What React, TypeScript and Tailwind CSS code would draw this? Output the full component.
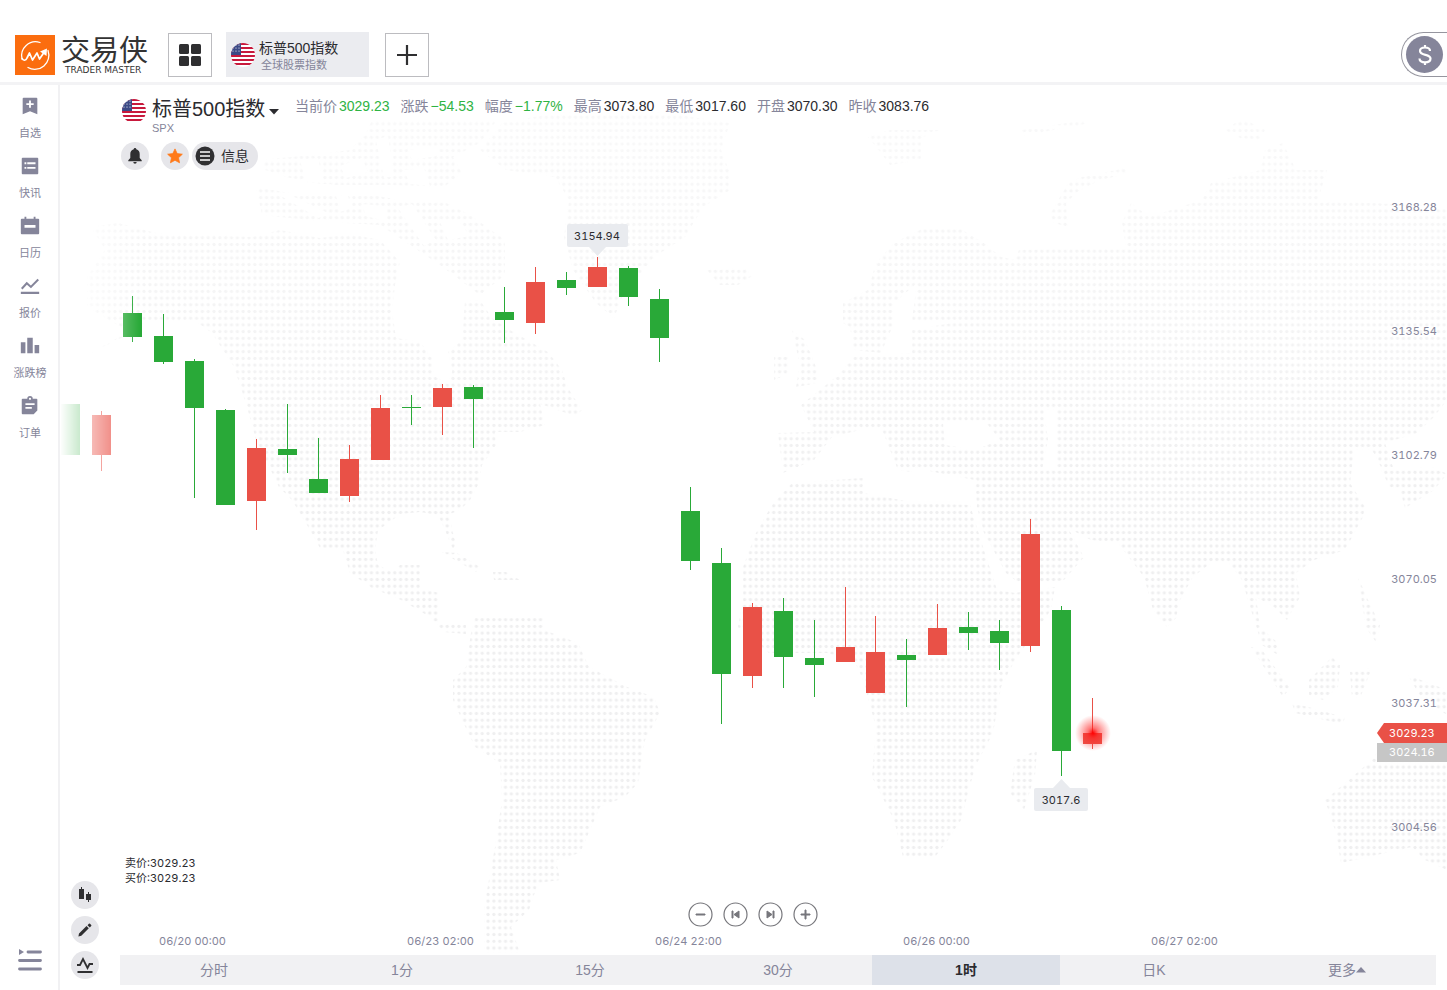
import { useState } from "react";
import type { ReactNode } from "react";

const GREEN = "#29a938";
const RED = "#e95147";

// [left, bodyTop, bodyBottom, high, low, up]
type Candle = [number, number, number, number, number, boolean];

const candles: Candle[] = [
  [61, 404, 455, 404, 455, false],
  [92, 415, 455, 411, 471, true],
  [123, 313, 337, 296, 342, false],
  [154, 336, 362, 314, 364, false],
  [185, 361, 408, 359, 498, false],
  [216, 410, 505, 409, 505, false],
  [247, 448, 501, 439, 530, true],
  [278, 449, 455, 404, 473, false],
  [309, 479, 493, 438, 493, false],
  [340, 459, 496, 445, 502, true],
  [371, 408, 460, 395, 460, true],
  [402, 407, 408, 395, 425, false],
  [433, 388, 407, 384, 435, true],
  [464, 387, 399, 385, 448, false],
  [495, 312, 320, 287, 343, false],
  [526, 282, 323, 267, 334, true],
  [557, 280, 288, 272, 295, false],
  [588, 267, 287, 257, 287, true],
  [619, 268, 297, 266, 306, false],
  [650, 299, 338, 289, 362, false],
  [681, 511, 561, 487, 570, false],
  [712, 563, 674, 548, 724, false],
  [743, 607, 676, 603, 688, true],
  [774, 611, 657, 598, 688, false],
  [805, 658, 665, 620, 697, false],
  [836, 647, 662, 587, 662, true],
  [866, 652, 693, 616, 693, true],
  [897, 655, 660, 639, 707, false],
  [928, 628, 655, 604, 655, true],
  [959, 627, 633, 612, 650, false],
  [990, 631, 643, 620, 670, false],
  [1021, 534, 646, 519, 652, true],
  [1052, 610, 751, 606, 776, false],
  [1083, 733, 744, 698, 749, true],
];

const land = [
  // north america
  "M91 227L118 223L156 233L252 237L280 230L320 238L350 234L380 240L400 262L395 285L392 310L396 338L420 342L432 358L434 376L448 384L452 372L448 352L462 340L465 300L480 300L492 318L510 330L548 352L562 370L568 388L582 410L575 416L540 404L545 425L520 432L495 432L496 445L482 465L478 485L470 500L460 510L450 514L452 530L456 543L453 550L445 530L438 515L420 512L400 514L390 522L378 530L375 550L378 565L392 572L400 565L420 565L420 588L439 593L439 622L466 625L466 634L444 632L430 617L401 600L372 588L350 573L343 550L320 548L310 530L292 500L279 487L256 440L247 407L234 367L212 333L198 323L149 320L91 353L131 333L87 307L87 277L105 250Z",
  // arctic islands and the channels between them
  "M372 120L497 120L480 143L453 157L462 173L444 187L390 185L335 185L290 178L265 170L262 160L310 155L350 150L365 135Z",
  "M300 160L318 158L324 184L306 182ZM340 166L362 158L368 172L346 178ZM376 140L388 136L394 176L384 178ZM408 150L440 146L436 156L412 160ZM404 170L424 168L430 186L410 184Z",
  "M256 187L300 195L372 195L400 200L440 200L470 215L505 240L505 275L480 295L460 280L440 265L410 245L380 225L330 222L290 218L262 215Z",
  "M276 193L288 194L330 214L318 218ZM336 196L348 196L352 208L340 212ZM362 204L384 206L388 222L366 216ZM398 208L412 204L436 240L424 246ZM440 222L458 220L470 236L448 240Z",
  // greenland, iceland
  "M502 123L560 112L660 112L730 123L721 150L730 173L730 190L703 207L685 237L654 257L622 297L614 318L596 303L573 270L564 237L569 200L555 177L506 170L480 150Z",
  "M707 270L745 268L752 276L738 285L720 285Z",
  // caribbean
  "M442 552L457 553L480 567L476 572L455 560ZM493 572L506 572L520 580L494 580Z",
  // south america
  "M475 618L544 618L544 630L578 643L589 667L627 687L654 697L660 713L645 740L638 783L625 797L600 807L580 853L556 860L560 880L538 883L529 910L511 927L520 953L484 953L484 907L495 847L502 800L500 763L475 747L462 720L453 700L453 680L466 667L471 633Z",
  // svalbard, novaya zemlya, severnaya zemlya
  "M868 137L890 130L939 130L921 138L921 160L890 165L881 153Z",
  "M1051 213L1068 183L1082 177L1126 168L1126 174L1100 180L1077 192L1066 203L1068 227L1052 222Z",
  "M1225 130L1242 118L1265 130L1260 140L1240 138ZM1022 130L1085 120L1085 124L1022 136Z",
  // eurasia with the black and caspian seas cut out
  "M843 323L843 303L868 290L876 263L894 243L926 227L957 227L984 243L1001 257L1015 260L1019 250L1126 247L1122 223L1131 203L1149 217L1202 200L1211 183L1234 177L1260 170L1265 150L1283 143L1296 170L1327 170L1318 200L1372 203L1447 207L1447 400L1434 417L1417 433L1385 443L1393 467L1381 467L1372 450L1354 450L1350 483L1365 507L1363 517L1345 550L1314 560L1296 573L1300 597L1287 620L1274 607L1256 597L1260 627L1278 643L1278 655L1262 645L1251 610L1242 580L1229 563L1211 563L1193 577L1180 600L1176 618L1167 627L1153 610L1144 577L1131 560L1118 543L1091 540L1068 528L1084 557L1064 580L1024 587L1006 573L984 533L977 507L975 480L939 473L912 467L903 440L912 472L898 470L881 427L860 430L832 437L814 460L783 473L778 433L814 432L801 405L836 377L854 357L912 353L912 330L952 323L912 320L917 283L894 303L894 323L881 353L854 350L850 327ZM943 423L984 420L1000 440L975 450L945 445ZM1044 410L1057 410L1057 470L1042 470L1048 440Z",
  "M792 330L805 340L816 367L818 383L796 387L800 365ZM774 357L788 357L788 374L774 380Z",
  // africa, madagascar
  "M792 483L863 478L863 493L917 503L970 505L984 550L997 590L1015 593L1055 587L1051 610L1015 660L1001 687L993 733L975 767L961 820L948 840L935 857L903 857L894 820L872 777L876 727L863 680L854 660L827 653L769 653L738 627L743 600L743 567L756 533L772 505Z",
  "M1015 760L1037 750L1035 775L1024 810L1010 793Z",
  // south-east asia
  "M1251 647L1262 650L1290 688L1283 697ZM1309 680L1332 657L1340 665L1338 687L1323 700L1309 695ZM1292 703L1320 710L1345 718L1342 724L1295 713ZM1358 577L1368 600L1380 625L1376 642L1366 628ZM1350 672L1372 668L1360 698L1352 698ZM1408 675L1447 690L1447 715L1420 696Z",
  // australia
  "M1372 760L1380 748L1410 742L1447 740L1447 870L1425 860L1412 847L1341 863L1336 833L1325 800L1345 783Z",
  // japan
  "M1381 470L1434 467L1447 474L1434 490L1405 508L1400 490L1390 487Z",
].join("");

const intervals = ["分时", "1分", "15分", "30分", "1时", "日K", "更多"];
const prices = ["3168.28", "3135.54", "3102.79", "3070.05", "3037.31", "3004.56"];
const dates = ["06/20 00:00", "06/23 02:00", "06/24 22:00", "06/26 00:00", "06/27 02:00"];

const stats = [
  { label: "当前价", value: "3029.23", color: "text-[#2fb344]" },
  { label: "涨跌", value: "−54.53", color: "text-[#2fb344]" },
  { label: "幅度", value: "−1.77%", color: "text-[#2fb344]" },
  { label: "最高", value: "3073.80", color: "text-[#2b2b2f]" },
  { label: "最低", value: "3017.60", color: "text-[#2b2b2f]" },
  { label: "开盘", value: "3070.30", color: "text-[#2b2b2f]" },
  { label: "昨收", value: "3083.76", color: "text-[#2b2b2f]" },
];

const navItems: { label: string; icon: ReactNode }[] = [
  {
    label: "自选",
    icon: (
      <path
        fillRule="evenodd"
        d="M5 3h14a1 1 0 0 1 1 1v17l-8-3.200L4 21V4a1 1 0 0 1 1-1zM11 6v3H8v2h3v3h2v-3h3V9h-3V6z"
      />
    ),
  },
  {
    label: "快讯",
    icon: (
      <path
        fillRule="evenodd"
        d="M4 3h16a1 1 0 0 1 1 1v16a1 1 0 0 1-1 1H4a1 1 0 0 1-1-1V4a1 1 0 0 1 1-1zM6 8v2h2V8zM9 8v2h9V8zM6 13v2h2v-2zM9 13v2h9v-2z"
      />
    ),
  },
  {
    label: "日历",
    icon: (
      <path
        fillRule="evenodd"
        d="M6 2h2v2h8V2h2v2h3a1 1 0 0 1 1 1v15a1 1 0 0 1-1 1H3a1 1 0 0 1-1-1V5a1 1 0 0 1 1-1h3zM6 11v3h12v-3z"
      />
    ),
  },
  {
    label: "报价",
    icon: (
      <path
        d="M3 15l5.500-6 4.500 4 8-8M2 19.500h20"
        fill="none"
        stroke="currentColor"
        strokeWidth="2.200"
      />
    ),
  },
  {
    label: "涨跌榜",
    icon: <path d="M2 8h5v12H2zM9 3h6v17H9zM17 11h5v9h-5z" />,
  },
  {
    label: "订单",
    icon: (
      <path
        fillRule="evenodd"
        d="M4 4h5a3 3 0 0 1 6 0h4a1 1 0 0 1 1 1v12l-4 4H4a1 1 0 0 1-1-1V5a1 1 0 0 1 1-1zM12 3a1.200 1.200 0 1 0 0 2.400a1.200 1.200 0 0 0 0-2.400zM7 9v2h10V9zM7 13v2h7v-2z"
      />
    ),
  },
];

function UsFlag() {
  return (
    <svg viewBox="0 0 24 24" className="size-6 shrink-0" aria-hidden="true">
      <clipPath id="flag-round">
        <circle cx="12" cy="12" r="12" />
      </clipPath>
      <g clipPath="url(#flag-round)">
        <rect width="24" height="24" fill="#fff" />
        {[0, 4, 8, 12, 16, 20].map((y) => (
          <rect key={y} y={y} width="24" height="2" fill="#c8193c" />
        ))}
        <rect width="10" height="12" fill="#3c4a86" />
        {[2, 5, 8].map((y) =>
          [2, 5, 8].map((x) => <circle key={`${x}-${y}`} cx={x} cy={y} r="0.6" fill="#fff" />)
        )}
      </g>
    </svg>
  );
}

function Logo() {
  return (
    <a href="#" className="flex w-[153px] items-center gap-[6px] text-[#333]">
      <svg viewBox="0 0 40 40" className="size-10 shrink-0" aria-hidden="true">
        <rect width="40" height="40" fill="#fb6d0f" />
        <path
          d="M25 7.500A14 14 0 0 0 7 24M13 32.500a14 14 0 0 0 20-17"
          fill="none"
          stroke="#fff"
          strokeWidth="1.300"
          strokeLinecap="round"
        />
        <path
          d="M7 23c1 3.500 4 2.500 5 0l2.500-5 3 7 4.500-7 2.500 6 5.500-8"
          fill="none"
          stroke="#fff"
          strokeWidth="1.700"
          strokeLinejoin="round"
        />
        <path d="M25 16.500L32 13.500l-.5 7.500z" fill="#fff" />
      </svg>
      <span className="flex flex-col">
        <span className="text-[29px] leading-[30px]">交易侠</span>
        <span className="pl-1 font-['DejaVu_Sans',sans-serif] text-[9px] leading-2 whitespace-nowrap">
          TRADER MASTER
        </span>
      </span>
    </a>
  );
}

function Header() {
  return (
    <header className="flex h-[85px] items-center border-b-[3px] border-[#f3f3f5] pt-[27px] pl-[15px]">
      <Logo />
      <button
        aria-label="布局"
        className="flex size-11 items-center justify-center border border-[#bcbcc0] bg-white"
      >
        <svg viewBox="0 0 22 22" className="size-[22px]" fill="#2f2f31">
          <rect width="10" height="10" rx="1.500" />
          <rect x="12" width="10" height="10" rx="1.500" />
          <rect y="12" width="10" height="10" rx="1.500" />
          <rect x="12" y="12" width="10" height="10" rx="1.500" />
        </svg>
      </button>
      <button className="ml-[14px] flex h-[45px] w-[143px] items-center gap-1 bg-[#ebecf0] pl-[5px] text-left">
        <UsFlag />
        <span className="flex flex-col pt-[2px]">
          <span className="text-sm leading-[18px] text-[#2b2b2f]">标普500指数</span>
          <span className="pl-[2px] text-[11px] leading-4 text-[#85859a]">全球股票指数</span>
        </span>
      </button>
      <button
        aria-label="添加"
        className="ml-4 flex size-11 items-center justify-center border border-[#bcbcc0] bg-white"
      >
        <svg viewBox="0 0 20 20" className="size-5" stroke="#2f2f31" strokeWidth="2.200">
          <path d="M10 0v20M0 10h20" />
        </svg>
      </button>
      <button
        aria-label="账户"
        className="ml-auto flex h-[45px] w-[46px] items-center rounded-l-full border border-r-0 border-[#96969f] bg-white pl-1"
      >
        <span className="flex size-[37px] items-center justify-center rounded-full bg-[#85859a]">
          <svg viewBox="0 0 14 22" className="h-[22px] w-[14px]" fill="none" stroke="#fff" strokeWidth="2.200">
            <path d="M12 7c0-2.200-2-3.500-5-3.500S2 4.800 2 7c0 5 10.500 2.800 10.500 7.500 0 2.500-2.200 3.900-5.500 3.900S1.500 17 1.500 14.500M7 1v3M7 18v3" />
          </svg>
        </span>
      </button>
    </header>
  );
}

function Sidebar() {
  return (
    <aside className="flex w-[60px] shrink-0 flex-col border-r-2 border-[#f1f1f3] pl-[2px]">
      <nav>
        {navItems.map((item) => (
          <a
            key={item.label}
            href="#"
            className="flex h-[60px] flex-col items-center gap-[6px] pt-[9px] text-[#85859a]"
          >
            <svg viewBox="0 0 24 24" className="size-6 p-px" fill="currentColor" aria-hidden="true">
              {item.icon}
            </svg>
            <span className="text-[11px] leading-[18px]">{item.label}</span>
          </a>
        ))}
      </nav>
      <button aria-label="展开菜单" className="mt-auto mb-[18px] flex justify-center text-[#85859a]">
        <svg viewBox="0 0 24 24" className="size-6" fill="none" stroke="currentColor" strokeWidth="2.800">
          <path d="M10 4h12.500M1.500 12.500h21M1.500 21h21" strokeLinecap="round" />
          <path d="M1 1l5 3-5 3z" fill="currentColor" stroke="none" />
        </svg>
      </button>
    </aside>
  );
}

function Chart() {
  return (
    <svg
      viewBox="60 85 1387 905"
      preserveAspectRatio="xMinYMin meet"
      className="absolute inset-0 size-full"
      role="img"
      aria-label="K线图"
    >
      <defs>
        <pattern id="dots" x="496.800" y="616.350" width="5.830" height="6.700" patternUnits="userSpaceOnUse">
          <circle cx="2.915" cy="3.350" r="1.650" fill="#efeff0" />
        </pattern>
        <linearGradient id="edge-fade" gradientUnits="userSpaceOnUse" x1="60" x2="140" y1="0" y2="0">
          <stop offset="0" stopColor="#fff" stopOpacity="0" />
          <stop offset="1" stopColor="#fff" />
        </linearGradient>
        <linearGradient id="top-fade" gradientUnits="userSpaceOnUse" x1="0" x2="0" y1="100" y2="500">
          <stop offset="0" stopColor="#fff" stopOpacity="0.35" />
          <stop offset="1" stopColor="#fff" />
        </linearGradient>
        <mask id="edge-mask" maskUnits="userSpaceOnUse" x="60" y="85" width="1387" height="905">
          <rect x="60" y="85" width="1387" height="905" fill="url(#edge-fade)" />
        </mask>
        <mask id="top-mask" maskUnits="userSpaceOnUse" x="60" y="85" width="1387" height="905">
          <rect x="60" y="85" width="1387" height="905" fill="url(#top-fade)" />
        </mask>
        <radialGradient id="pulse">
          <stop offset="0" stopColor="#ff0000" />
          <stop offset="0.300" stopColor="#ff2020" stopOpacity="0.600" />
          <stop offset="1" stopColor="#ff4040" stopOpacity="0" />
        </radialGradient>
      </defs>
      <g mask="url(#edge-mask)">
        <path d={land} fill="url(#dots)" fillRule="evenodd" mask="url(#top-mask)" />
        {candles.map(([x, top, bottom, high, low, up]) => (
          <g key={x} fill={up ? RED : GREEN} shapeRendering="crispEdges">
            <rect x={x + 9} y={high} width="1" height={low - high} />
            <rect x={x} y={top} width="19" height={bottom - top} />
          </g>
        ))}
      </g>
      <circle cx="1093" cy="733" r="18" fill="url(#pulse)" />
      <g fill="#e9ebef">
        <rect x="567" y="224" width="61" height="23" rx="2" />
        <path d="M589 247h17l-8.500 9z" />
        <rect x="1034" y="788" width="54" height="23" rx="2" />
        <path d="M1053 788h17l-8.500-9z" />
      </g>
      <g fill="#2b2b2f" fontSize="11" textAnchor="middle" className="font-['Inter',sans-serif] tabular-nums">
        <text x="597" y="240">3154.94</text>
        <text x="1061" y="804">3017.6</text>
      </g>
    </svg>
  );
}

function QuoteBar() {
  return (
    <div className="flex items-start">
      <div className="mt-[12px] ml-[2px] flex w-[173px] gap-[6px]">
        <div className="mt-[2px]">
          <UsFlag />
        </div>
        <div>
          <button className="flex items-center text-xl leading-[25px] whitespace-nowrap text-[#2b2b2f]">
            标普500指数
            <svg viewBox="0 0 10 6" className="mt-1 ml-1 h-[6px] w-[10px]" fill="currentColor">
              <path d="M0 0h10L5 5.500z" />
            </svg>
          </button>
          <div className="text-[11px] leading-3 text-[#85859a]">SPX</div>
        </div>
      </div>
      <dl className="mt-[11px] flex flex-wrap gap-x-[11px] text-sm leading-5">
        {stats.map((s) => (
          <div key={s.label} className="flex gap-[2px]">
            <dt className="text-[#85859a]">{s.label}</dt>
            <dd className={s.color}>{s.value}</dd>
          </div>
        ))}
      </dl>
    </div>
  );
}

function InfoButtons() {
  return (
    <div className="mt-2 ml-px flex items-center">
      <button aria-label="提醒" className="flex size-7 items-center justify-center rounded-full bg-[#e6e6ea]">
        <svg viewBox="0 0 16 18" className="h-[18px] w-4" fill="#2f2f31">
          <path d="M8 1a1.300 1.300 0 0 1 1.300 1.300c2.300.6 3.400 2.400 3.400 4.700v4l2 2.300v.9H1.300v-.9l2-2.300V7c0-2.300 1.100-4.100 3.400-4.700A1.300 1.300 0 0 1 8 1zM6.300 15h3.400a1.700 1.700 0 0 1-3.400 0z" />
        </svg>
      </button>
      <button aria-label="收藏" className="ml-3 flex size-7 items-center justify-center rounded-full bg-[#e6e6ea]">
        <svg viewBox="0 0 24 24" className="size-[18px]" fill="#ff7a1a" stroke="#ff7a1a" strokeWidth="1" strokeLinejoin="round">
          <path d="M12 2.500l2.900 6.300 6.900.8-5.100 4.700 1.400 6.800-6.100-3.400-6.100 3.400 1.400-6.800-5.100-4.700 6.900-.8z" />
        </svg>
      </button>
      <button className="ml-[3px] flex h-7 items-center gap-[6px] rounded-full bg-[#e6e6ea] pr-[9px] pl-[3px] text-sm text-[#2b2b2f]">
        <svg viewBox="0 0 20 20" className="size-5">
          <circle cx="10" cy="10" r="9.500" fill="#2f2f31" />
          <path d="M5 6h10M5 10h10M5 14h10" stroke="#fff" strokeWidth="1.600" />
        </svg>
        信息
      </button>
    </div>
  );
}

function PriceAxis() {
  return (
    <div className="relative w-[70px] shrink-0 pt-[60px] font-['Inter',sans-serif] text-[11px] tabular-nums">
      <ul>
        {prices.map((p) => (
          <li key={p} className="flex h-[124px] items-center justify-end pr-[10px] text-[#85859a]">
            {p}
          </li>
        ))}
      </ul>
      <div className="absolute top-[638px] right-0 w-full leading-5 text-white">
        <div className="bg-[#e95147] pl-3 [clip-path:polygon(0_50%,7px_0,100%_0,100%_100%,7px_100%)]">3029.23</div>
        <div className="bg-[#c6c6c6] pl-3 leading-[19px]">3024.16</div>
      </div>
    </div>
  );
}

const toolIcons = [
  {
    label: "K线类型",
    icon: (
      <path d="M3 3h2V1h1v2h2v10H3V3zM10 8h2V6h1v2h2v6h-2v2h-1v-2h-2V8z" fill="#2f2f31" />
    ),
  },
  {
    label: "画线",
    icon: (
      <path d="M3 12.500L10.500 5l2.300 2.300L5.300 14.800 2.400 15.400zM11.500 4.200l1.400-1.400a.8.8 0 0 1 1.100 0l1.200 1.200a.8.8 0 0 1 0 1.100l-1.400 1.400z" fill="#2f2f31" />
    ),
  },
  {
    label: "指标",
    icon: (
      <path d="M1 9h3l3-6 4.500 9 2-4H17M1.500 16h15" fill="none" stroke="#2f2f31" strokeWidth="1.800" />
    ),
  },
];

const zoomIcons = [
  { label: "缩小", d: "M8 12h9v1H8z" },
  { label: "后退", d: "M9 9h1v7H9zM16 9v7l-5-3.500z" },
  { label: "前进", d: "M9 9v7l5-3.500zM15 9h1v7h-1z" },
  { label: "放大", d: "M8 12h4V8h1v4h4v1h-4v4h-1v-4H8z" },
];

export default function App() {
  const [active, setActive] = useState("1时");

  return (
    <div className="flex min-h-screen flex-col bg-white font-['Liberation_Sans','Noto_Sans_CJK_SC',sans-serif]">
      <Header />
      <div className="flex flex-1">
        <Sidebar />
        <main className="relative flex min-w-0 flex-1">
          <Chart />
          <div className="relative flex w-[60px] shrink-0 flex-col justify-end gap-[7px] pb-[11px] pl-[11px]">
            {toolIcons.map((t) => (
              <button
                key={t.label}
                aria-label={t.label}
                className="flex size-7 items-center justify-center rounded-full bg-[#e6e6ea]"
              >
                <svg viewBox="0 0 18 18" className="size-[18px]">
                  {t.icon}
                </svg>
              </button>
            ))}
          </div>
          <div className="relative flex min-w-0 flex-1 flex-col">
            <div className="flex flex-1">
              <div className="flex min-w-0 flex-1 flex-col">
                <QuoteBar />
                <InfoButtons />
                <div className="mt-auto pb-4 pl-[5px] font-['Inter','Noto_Sans_CJK_SC',sans-serif] text-[11px] leading-[15px] text-[#2b2b2f] tabular-nums">
                  <p>卖价:3029.23</p>
                  <p>买价:3029.23</p>
                </div>
              </div>
              <PriceAxis />
            </div>
            <div className="flex justify-center gap-[10px] pr-[61px]">
              {zoomIcons.map((z) => (
                <button key={z.label} aria-label={z.label}>
                  <svg viewBox="0 0 25 25" className="size-[25px]">
                    <circle cx="12.500" cy="12.500" r="11.500" fill="#fff" stroke="#77777c" strokeWidth="1.200" />
                    <path d={z.d} fill="#77777c" stroke="#77777c" strokeWidth="1" />
                  </svg>
                </button>
              ))}
            </div>
            <ul className="flex pt-[6px] pb-[6px] pl-[39px] font-['Inter',sans-serif] text-[11px] leading-4 text-[#85859a] tabular-nums">
              {dates.map((d) => (
                <li key={d} className="w-[248px] whitespace-nowrap">
                  {d}
                </li>
              ))}
            </ul>
            <div className="mr-[11px] mb-[5px] flex bg-[#f1f1f3]">
              {intervals.map((name) => (
                <button
                  key={name}
                  onClick={() => setActive(name)}
                  className={`flex h-[30px] flex-1 items-center justify-center text-sm ${
                    active === name ? "bg-[#dde1e9] font-bold text-[#2b2b2f]" : "text-[#85859a]"
                  }`}
                >
                  {name}
                  {name === "更多" && (
                    <svg viewBox="0 0 10 6" className="-mr-[10px] h-[6px] w-[10px]" fill="currentColor">
                      <path d="M0 5.500h10L5 0z" />
                    </svg>
                  )}
                </button>
              ))}
            </div>
          </div>
        </main>
      </div>
    </div>
  );
}
